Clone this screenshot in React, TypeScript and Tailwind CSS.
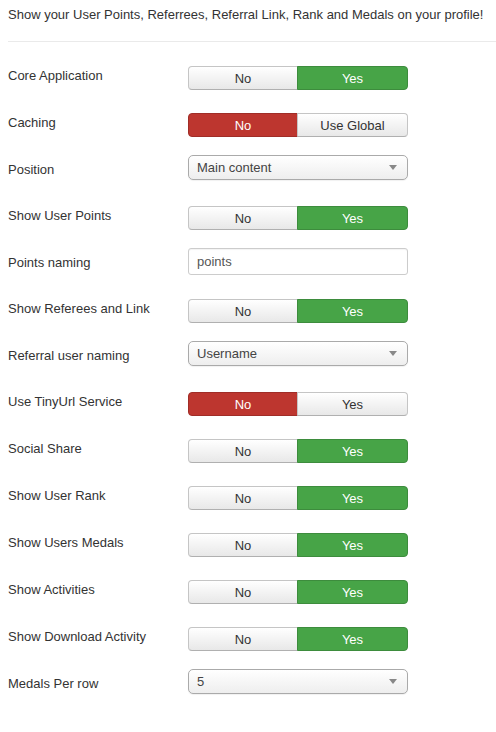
import React from "react";

type Row =
  | { kind: "toggle"; label: string; left: string; right: string; active: "left" | "right"; color: "green" | "red" }
  | { kind: "select"; label: string; value: string }
  | { kind: "input"; label: string; value: string };

const rows: Row[] = [
  { kind: "toggle", label: "Core Application", left: "No", right: "Yes", active: "right", color: "green" },
  { kind: "toggle", label: "Caching", left: "No", right: "Use Global", active: "left", color: "red" },
  { kind: "select", label: "Position", value: "Main content" },
  { kind: "toggle", label: "Show User Points", left: "No", right: "Yes", active: "right", color: "green" },
  { kind: "input", label: "Points naming", value: "points" },
  { kind: "toggle", label: "Show Referees and Link", left: "No", right: "Yes", active: "right", color: "green" },
  { kind: "select", label: "Referral user naming", value: "Username" },
  { kind: "toggle", label: "Use TinyUrl Service", left: "No", right: "Yes", active: "left", color: "red" },
  { kind: "toggle", label: "Social Share", left: "No", right: "Yes", active: "right", color: "green" },
  { kind: "toggle", label: "Show User Rank", left: "No", right: "Yes", active: "right", color: "green" },
  { kind: "toggle", label: "Show Users Medals", left: "No", right: "Yes", active: "right", color: "green" },
  { kind: "toggle", label: "Show Activities", left: "No", right: "Yes", active: "right", color: "green" },
  { kind: "toggle", label: "Show Download Activity", left: "No", right: "Yes", active: "right", color: "green" },
  { kind: "select", label: "Medals Per row", value: "5" },
];

const plain =
  "bg-linear-to-b from-white to-[#e8e8e8] text-[#333] border border-[#c5c5c5] border-b-[#b0b0b0]";
const green = "bg-[#47a447] text-white border border-[#3d8c3d]";
const red = "bg-[#bd362f] text-white border border-[#a02d27]";

const Toggle = ({ row }: { row: Extract<Row, { kind: "toggle" }> }) => {
  const on = row.color === "green" ? green : red;
  return (
    <div className="flex w-[220px] h-[24px] text-[13px] leading-[23px]">
      <div
        className={`w-[110px] flex-none text-center rounded-l-[4px] ${
          row.active === "left" ? on : plain
        }`}
      >
        {row.left}
      </div>
      <div
        className={`flex-1 text-center rounded-r-[4px] -ml-px ${
          row.active === "right" ? on : plain
        }`}
      >
        {row.right}
      </div>
    </div>
  );
};

const Select = ({ value }: { value: string }) => (
  <div className="-mt-[5px] w-[220px] h-[25px] flex items-center justify-between pl-[8px] pr-[10px] rounded-[5px] border border-[#aaa] bg-linear-to-b from-white to-[#eee] text-[13px] text-[#444] shadow-[0_1px_1px_rgba(0,0,0,0.06)]">
    <span>{value}</span>
    <svg width="8" height="5" viewBox="0 0 8 5">
      <path d="M0 0 L8 0 L4 5 Z" fill="#888" />
    </svg>
  </div>
);

const Input = ({ value }: { value: string }) => (
  <div className="-mt-[5px] w-[220px] h-[27px] flex items-center pl-[8px] rounded-[3px] border border-[#ccc] bg-white text-[13px] text-[#555] shadow-[inset_0_1px_1px_rgba(0,0,0,0.05)]">
    {value}
  </div>
);

export default function App() {
  return (
    <div
      className="w-[496px] h-[732px] bg-white text-[#333] px-[8px]"
      style={{ fontFamily: '"Liberation Sans", Arial, sans-serif' }}
    >
      <p className="pt-[6px] text-[13px] leading-[18px]">
        Show your User Points, Referrees, Referral Link, Rank and Medals on your profile!
      </p>
      <div className="mt-[17px] h-px bg-[#eaeaea] -mr-[8px]" />
      <div className="mt-[24px]">
        {rows.map((row) => (
          <div
            key={row.label}
            className={`flex items-start ${row.kind === "toggle" ? "h-[47px]" : "h-[46px]"}`}
          >
            <div className="w-[180px] flex-none pt-px text-[13px] leading-[18px]">{row.label}</div>
            {row.kind === "toggle" && <Toggle row={row} />}
            {row.kind === "select" && <Select value={row.value} />}
            {row.kind === "input" && <Input value={row.value} />}
          </div>
        ))}
      </div>
    </div>
  );
}
